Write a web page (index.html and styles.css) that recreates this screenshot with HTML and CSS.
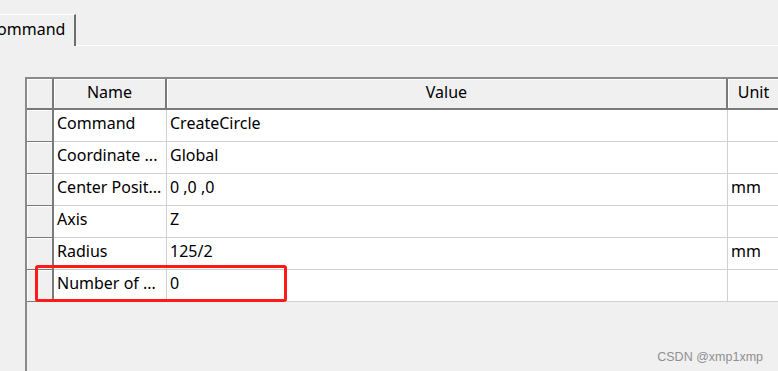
FILE: index.html
```html
<!DOCTYPE html>
<html lang="en">
<head>
  <meta charset="UTF-8">
  <title>Command Properties</title>
  <link rel="stylesheet" href="styles.css">
</head>
<body>
<div class="window">
  <div class="tab-bar">
    <div class="tab">Command</div>
    <div class="tab-rest"></div>
  </div>

  <div class="pane">
    <div class="grid-wrap">
      <table class="grid">
        <colgroup>
          <col class="c-row">
          <col class="c-name">
          <col class="c-value">
          <col class="c-unit">
        </colgroup>
        <thead>
          <tr>
            <th class="corner"></th>
            <th>Name</th>
            <th>Value</th>
            <th>Unit</th>
          </tr>
        </thead>
        <tbody>
          <tr><td class="rh"></td><td>Command</td><td>CreateCircle</td><td></td></tr>
          <tr><td class="rh"></td><td>Coordinate ...</td><td>Global</td><td></td></tr>
          <tr><td class="rh"></td><td>Center Posit...</td><td>0 ,0 ,0</td><td>mm</td></tr>
          <tr><td class="rh"></td><td>Axis</td><td>Z</td><td></td></tr>
          <tr><td class="rh"></td><td>Radius</td><td>125/2</td><td>mm</td></tr>
          <tr><td class="rh"></td><td>Number of ...</td><td>0</td><td></td></tr>
        </tbody>
      </table>
      <div class="highlight"></div>
    </div>
  </div>

  <div class="watermark">CSDN @xmp1xmp</div>
</div>
</body>
</html>
```

FILE: styles.css
```css
html, body {
  margin: 0;
  padding: 0;
  width: 778px;
  height: 371px;
  overflow: hidden;
  background: #f0f0f0;
}
.window {
  position: relative;
  height: 371px;
  font-family: "Noto Sans", "Noto Sans CJK SC", sans-serif;
  font-size: 16px;
  color: #000;
}
.tab-bar {
  display: flex;
  align-items: flex-end;
  height: 46px;
}
.tab {
  margin-left: -13px;
  width: 89px;
  height: 32px;
  padding: 0 10px 3px 0;
  line-height: 29px;
  border-top: 1px solid #fff;
  border-right: 2px solid #6e6e6e;
  box-sizing: border-box;
  text-align: right;
}
.tab-rest {
  flex: 1;
  border-bottom: 1px solid #fff;
  height: 0;
}
.pane {
  padding: 31px 0 0 25px;
  height: 294px;
}
.grid-wrap {
  position: relative;
  width: 760px;
  height: 294px;
  border-left: 2px solid #8a8a8a;
  border-top: 2px solid #8a8a8a;
  box-sizing: border-box;
}
.grid {
  border-collapse: separate;
  border-spacing: 0;
  table-layout: fixed;
  width: 754px;
}
.c-row { width: 27px; }
.c-name { width: 113px; }
.c-value { width: 561px; }
.c-unit { width: 53px; }
.grid th {
  height: 31px;
  padding: 0 0 3px;
  box-sizing: border-box;
  font-weight: normal;
  background: #f0f0f0;
  border-right: 2px solid #7a7a7a;
  border-bottom: 2px solid #7a7a7a;
  box-shadow: inset 1px 1px 0 #fff;
  text-align: center;
}
.grid td {
  height: 32px;
  padding: 0 0 5px 3px;
  box-sizing: border-box;
  background: #fff;
  border-right: 1px solid #d0d0d0;
  border-bottom: 1px solid #d0d0d0;
  white-space: nowrap;
  overflow: hidden;
}
.grid td.rh {
  padding: 0;
  background: #f0f0f0;
  border-right: 2px solid #7a7a7a;
  border-bottom: 1px solid #7a7a7a;
  box-shadow: inset 1px 1px 0 #fff;
}
.highlight {
  position: absolute;
  left: 8px;
  top: 186px;
  width: 252px;
  height: 37px;
  border: 3px solid #ff1a1a;
  border-radius: 3px;
  box-sizing: border-box;
}
.watermark {
  position: absolute;
  right: 15px;
  bottom: 7px;
  font-family: "Liberation Sans", sans-serif;
  font-size: 12.5px;
  color: #8f8f8f;
}
```
